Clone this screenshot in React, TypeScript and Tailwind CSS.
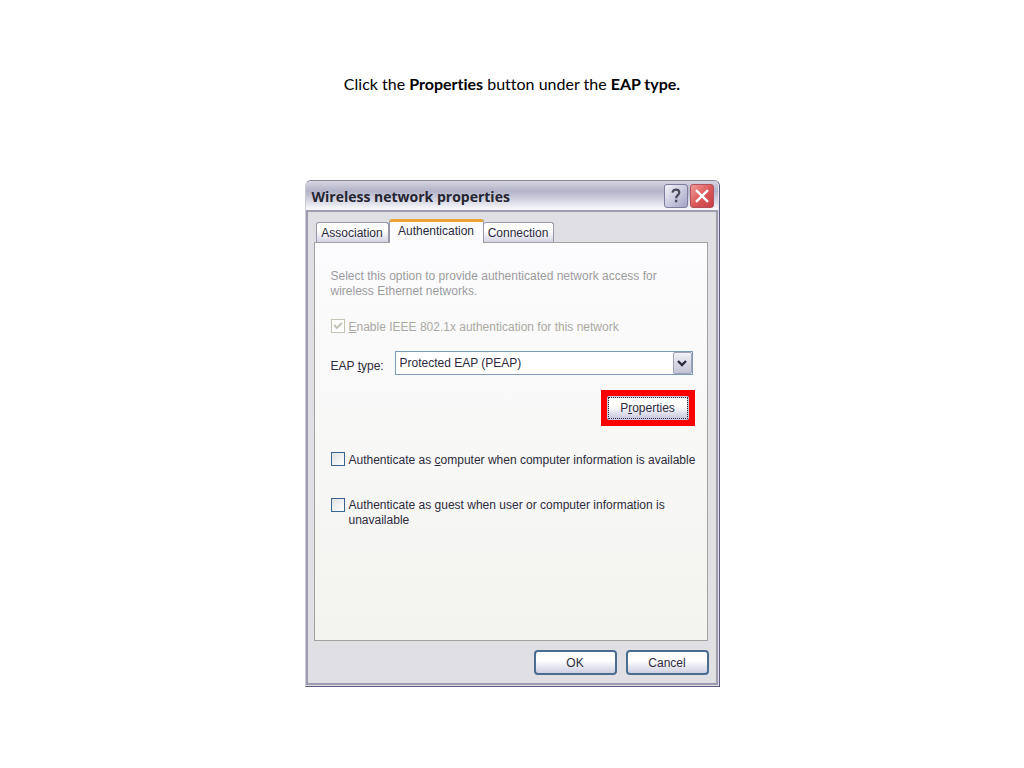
import { ReactNode } from "react";
import { clsx } from "clsx";

interface CheckOptionProps {
  id: string;
  checked?: boolean;
  disabled?: boolean;
  className?: string;
  children: ReactNode;
}

function CheckOption({ id, checked = false, disabled = false, className, children }: CheckOptionProps) {
  return (
    <div className={clsx("flex items-start gap-1", className)}>
      <span className="relative flex shrink-0">
        <input
          id={id}
          type="checkbox"
          defaultChecked={checked}
          disabled={disabled}
          className={clsx(
            "peer size-[14px] appearance-none border",
            disabled
              ? "border-[#c5c3b4] bg-[#fdfdfb]"
              : "border-[#3a6591] bg-linear-to-br from-[#dfe2e3] to-white"
          )}
        />
        <svg
          viewBox="0 0 15 15"
          className={clsx(
            "pointer-events-none absolute inset-0 size-[14px] opacity-0 peer-checked:opacity-100",
            disabled ? "text-[#c2c0b3]" : "text-[#21a121]"
          )}
        >
          <path d="M3.500 6.500 6.300 9.500 11.500 4.300" fill="none" stroke="currentColor" strokeWidth="2.200" />
        </svg>
      </span>
      <label htmlFor={id} className={disabled ? "text-[#aaa9a2]" : "text-[#2d2b3c]"}>
        {children}
      </label>
    </div>
  );
}

function DialogButton({ children }: { children: ReactNode }) {
  return (
    <button
      type="button"
      className="h-[25px] w-[83px] rounded-[4px] border-2 border-[#4a6c90] bg-linear-to-b from-white from-40% to-[#cfcfe2] text-[#2d2b3c]"
    >
      {children}
    </button>
  );
}

function TitleBar() {
  return (
    <div className="flex h-[29px] items-center gap-0.5 bg-linear-to-b from-[#d6d6e2] via-[#b3b3ca] via-35% to-[#fbfbfd] pr-1 pl-1.5">
      <h1 className="flex-1 pt-0.5 font-['Open_Sans','Noto_Sans',sans-serif] text-sm leading-5 font-bold text-[#262531]">
        Wireless network properties
      </h1>
      <button
        type="button"
        aria-label="Help"
        className="flex size-6 items-center justify-center rounded-[3px] border border-[#7d7da0] bg-linear-to-br from-[#f4f4fa] to-[#a3a4c4] text-[#4a495c]"
      >
        <svg viewBox="0 0 24 24" className="size-6" fill="none" stroke="currentColor" strokeWidth="2.400">
          <path d="M8.200 8.300C8.500 5.900 10 5 12 5c2.200 0 3.600 1.200 3.600 3.100 0 2.900-3.500 3.100-3.500 6.300" />
          <path d="M12.100 16.200v2.500" strokeWidth="2.600" />
        </svg>
      </button>
      <button
        type="button"
        aria-label="Close"
        className="flex size-6 items-center justify-center rounded-[3px] border border-[#b3525c] bg-linear-to-br from-[#ee9a96] via-[#dc5a5a] to-[#c43c44] text-white"
      >
        <svg viewBox="0 0 24 24" className="size-6" fill="none" stroke="currentColor" strokeWidth="2.600">
          <path d="m5.500 5.500 13 13M18.500 5.500l-13 13" />
        </svg>
      </button>
    </div>
  );
}

function Tabs() {
  const idle =
    "h-5 rounded-t-[3px] border border-b-0 border-[#9796ab] bg-linear-to-b from-white from-40% to-[#d3d3e4] text-center";
  return (
    <div role="tablist" className="flex items-end pl-0.5">
      <button type="button" role="tab" aria-selected="false" className={clsx(idle, "w-[73px]")}>
        Association
      </button>
      <button
        type="button"
        role="tab"
        aria-selected="true"
        className="relative z-10 -mb-px h-6 w-[95px] rounded-t-[3px] border-x border-t-3 border-x-[#9796ab] border-t-[#eba534] bg-[#fcfcfe] pb-1 text-center"
      >
        Authentication
      </button>
      <button type="button" role="tab" aria-selected="false" className={clsx(idle, "w-[70px] border-l-0")}>
        Connection
      </button>
    </div>
  );
}

export default function App() {
  return (
    <main className="flex min-h-screen flex-col items-center bg-white pt-[74px] pb-20 font-['Liberation_Sans',Arial,sans-serif] text-xs">
      <p className="font-['Lato',sans-serif] text-base leading-5 text-black [font-variant-ligatures:none]">
        Click the <b>Properties</b> button under the <b>EAP type.</b>
      </p>

      <section className="mt-[86px] w-full max-w-[415px] rounded-t-md border border-t-[#85849a] border-r-[#5d5b84] border-b-[#5d5b84] border-l-[#c9c9d6] bg-[#dfdfe4]">
        <div className="overflow-hidden rounded-t-[5px] border-r border-[#e6e6ee]">
          <TitleBar />
        </div>
        <div className="mr-px mb-px border-2 border-[#9d9cae] pt-[7px] pr-[7px] pb-2 pl-1.5 text-[#2d2b3c]">
          <Tabs />
          <div className="mr-px min-h-[399px] border border-[#a3a29f] bg-linear-to-b from-[#fcfcfe] to-[#f3f3ef] pt-[26px] pr-3 pl-4">
            <p className="leading-[15px] text-[#9c9b9e]">
              Select this option to provide authenticated network access for
              <br />
              wireless Ethernet networks.
            </p>

            <CheckOption id="enable-8021x" checked disabled className="mt-5 leading-4">
              <u>E</u>nable IEEE 802.1x authentication for this network
            </CheckOption>

            <div className="mt-4 flex items-center">
              <label htmlFor="eap-type" className="w-16 pt-1.5">
                EAP <u>t</u>ype:
              </label>
              <div className="relative mr-0.5 flex-1">
                <select
                  id="eap-type"
                  className="block h-6 w-full appearance-none border border-[#7d9bb5] bg-white pl-1"
                >
                  <option>Protected EAP (PEAP)</option>
                </select>
                <span className="pointer-events-none absolute top-px right-px flex h-[22px] w-[19px] items-center justify-center rounded-xs border border-[#a0a0b8] bg-linear-to-b from-[#f1f1f6] to-[#c3c3d6]">
                  <svg viewBox="0 0 10 8" className="h-2 w-2.5 text-[#2d2b3c]">
                    <path d="m1 2 4 4 4-4" fill="none" stroke="currentColor" strokeWidth="2.400" />
                  </svg>
                </span>
              </div>
            </div>

            <div className="mt-[15px] flex justify-end">
              <div className="border-6 border-[#fe0000] bg-[#fe0000]">
                <button
                  type="button"
                  className="block h-6 w-[82px] rounded-xs border-2 border-[#cfcfe2] bg-linear-to-b from-white from-40% to-[#cbcbe0] outline-1 -outline-offset-2 outline-dotted outline-[#2d2b3c]"
                >
                  P<u>r</u>operties
                </button>
              </div>
            </div>

            <CheckOption id="auth-computer" className="mt-[26px] leading-4 whitespace-nowrap">
              Authenticate as <u>c</u>omputer when computer information is available
            </CheckOption>
            <CheckOption id="auth-guest" className="mt-[30px] leading-[15px]">
              <span className="block">
                Authenticate as <u>g</u>uest when user or computer information is
              </span>
              <span className="block">unavailable</span>
            </CheckOption>
          </div>

          <div className="mt-[9px] flex justify-end gap-[9px]">
            <DialogButton>OK</DialogButton>
            <DialogButton>Cancel</DialogButton>
          </div>
        </div>
      </section>
    </main>
  );
}
